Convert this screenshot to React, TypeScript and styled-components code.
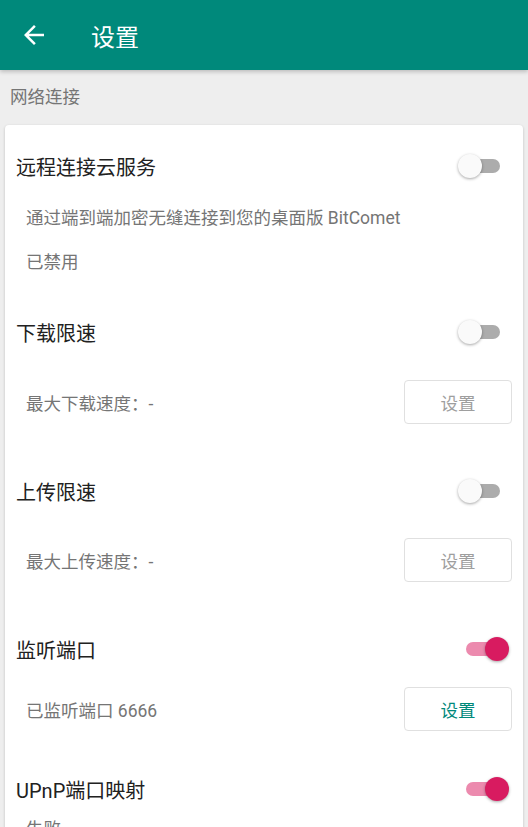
import React from 'react';
import styled, { createGlobalStyle } from 'styled-components';

const GlobalStyle = createGlobalStyle`
    body {
        margin: 0;
        background-color: #eeeeee;
        font-family: Roboto, "Noto Sans CJK SC", sans-serif;
    }
`;

const Page = styled.div`
    width: 528px;
    height: 827px;
    overflow: hidden;
    background-color: #eeeeee;
`;

const AppBar = styled.header`
    height: 70px;
    background-color: #00897b;
    display: flex;
    align-items: center;
    padding-left: 19px;
    box-shadow: 0 2px 4px rgba(0, 0, 0, 0.2);
    position: relative;
`;

const BarTitle = styled.h1`
    margin: 0 0 0 42px;
    font-size: 24px;
    font-weight: 400;
    color: white;
`;

const SectionLabel = styled.div`
    padding: 14px 10px 0;
    font-size: 17.5px;
    line-height: 26px;
    color: #757575;
`;

const Card = styled.section`
    margin: 15px 5px 0;
    background-color: white;
    border-radius: 4px;
    box-shadow: 0 1px 3px rgba(0, 0, 0, 0.2);
    padding-top: 16px;
`;

const Item = styled.div<{ $after: number }>`
    padding-bottom: ${(p) => p.$after}px;
`;

const TitleRow = styled.div`
    height: 50px;
    display: flex;
    align-items: center;
    justify-content: space-between;
    padding: 0 13px 0 11px;
`;

const Title = styled.span`
    font-size: 20px;
    color: #212121;
`;

const Line = styled.div<{ $top: number }>`
    margin-top: ${(p) => p.$top}px;
    padding-left: 21px;
    font-size: 17.5px;
    line-height: 26px;
    color: #757575;
`;

const ActionRow = styled.div<{ $top: number }>`
    margin-top: ${(p) => p.$top}px;
    display: flex;
    align-items: center;
    justify-content: space-between;
    padding: 0 11px 0 21px;
`;

const ActionText = styled.span`
    font-size: 17.5px;
    color: #757575;
`;

const SetButton = styled.button<{ $enabled: boolean }>`
    width: 108px;
    height: 44px;
    border: 1px solid #e0e0e0;
    border-radius: 4px;
    background: white;
    font-family: inherit;
    font-size: 17.5px;
    color: ${(p) => (p.$enabled ? '#00897b' : '#9e9e9e')};
`;

const SwitchBox = styled.div`
    position: relative;
    width: 52px;
    height: 26px;
`;

const Track = styled.div<{ $on: boolean }>`
    position: absolute;
    left: 8px;
    top: 6px;
    width: 34px;
    height: 14px;
    border-radius: 7px;
    background-color: ${(p) => (p.$on ? '#ec8aae' : '#acacac')};
`;

const Thumb = styled.div<{ $on: boolean }>`
    position: absolute;
    top: 1px;
    left: ${(p) => (p.$on ? '27px' : '0')};
    width: 24px;
    height: 24px;
    border-radius: 50%;
    background-color: ${(p) => (p.$on ? '#d81b60' : '#fafafa')};
    box-shadow: 0 1px 3px rgba(0, 0, 0, 0.35);
`;

const Switch = ({ on }: { on: boolean }) => (
    <SwitchBox>
        <Track $on={on} />
        <Thumb $on={on} />
    </SwitchBox>
);

const BackArrow = () => (
    <svg width="30" height="30" viewBox="0 0 24 24" fill="white">
        <path d="M20 11H7.83l5.59-5.59L12 4l-8 8 8 8 1.41-1.41L7.83 13H20v-2z" />
    </svg>
);

const App = () => {
    return (
        <Page>
            <GlobalStyle />
            <AppBar>
                <BackArrow />
                <BarTitle>设置</BarTitle>
            </AppBar>
            <SectionLabel>网络连接</SectionLabel>
            <Card>
                <Item $after={32}>
                    <TitleRow>
                        <Title>远程连接云服务</Title>
                        <Switch on={false} />
                    </TitleRow>
                    <Line $top={14}>通过端到端加密无缝连接到您的桌面版 BitComet</Line>
                    <Line $top={18}>已禁用</Line>
                </Item>
                <Item $after={42}>
                    <TitleRow>
                        <Title>下载限速</Title>
                        <Switch on={false} />
                    </TitleRow>
                    <ActionRow $top={23}>
                        <ActionText>最大下载速度：-</ActionText>
                        <SetButton $enabled={false}>设置</SetButton>
                    </ActionRow>
                </Item>
                <Item $after={42}>
                    <TitleRow>
                        <Title>上传限速</Title>
                        <Switch on={false} />
                    </TitleRow>
                    <ActionRow $top={22}>
                        <ActionText>最大上传速度：-</ActionText>
                        <SetButton $enabled={false}>设置</SetButton>
                    </ActionRow>
                </Item>
                <Item $after={33}>
                    <TitleRow>
                        <Title>监听端口</Title>
                        <Switch on={true} />
                    </TitleRow>
                    <ActionRow $top={13}>
                        <ActionText>已监听端口 6666</ActionText>
                        <SetButton $enabled={true}>设置</SetButton>
                    </ActionRow>
                </Item>
                <Item $after={20}>
                    <TitleRow>
                        <Title>UPnP端口映射</Title>
                        <Switch on={true} />
                    </TitleRow>
                    <Line $top={2}>失败</Line>
                </Item>
            </Card>
        </Page>
    );
};

export default App;
